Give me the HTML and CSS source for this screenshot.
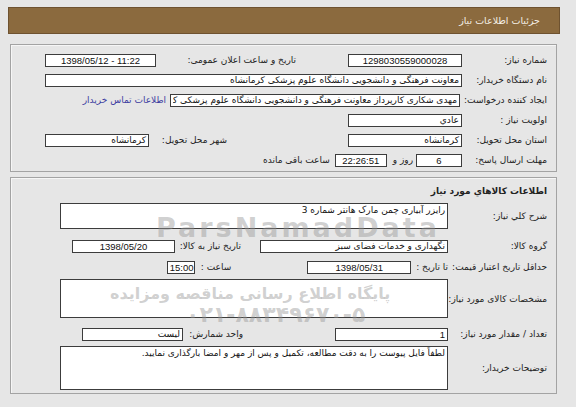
FILE: index.html
```html
<!DOCTYPE html>
<html lang="fa" dir="rtl">
<head>
<meta charset="utf-8">
<title>جزئیات اطلاعات نیاز</title>
<link rel="stylesheet" href="styles.css">
</head>
<body>
<div class="page">
  <div class="header">جزئیات اطلاعات نیاز</div>

  <div class="panel p1">
    <div class="row">
      <span class="lbl">شماره نیاز:</span>
      <span class="box c num" dir="ltr" style="width:114px">1298030559000028</span>
      <span class="lbl2" style="margin-right:52px;width:140px">تاریخ و ساعت اعلان عمومی:</span>
      <span class="box c num" dir="ltr" style="width:111px">1398/05/12 - 11:22</span>
    </div>
    <div class="row">
      <span class="lbl">نام دستگاه خریدار:</span>
      <span class="box" style="width:417px">معاونت فرهنگی و دانشجویی دانشگاه علوم پزشکی کرمانشاه</span>
    </div>
    <div class="row">
      <span class="lbl auto">ایجاد کننده درخواست:</span>
      <span class="box clip" style="width:290px"><span class="inner">مهدی شکاری کارپرداز معاونت فرهنگی و دانشجویی دانشگاه علوم پزشکی کرم</span></span>
      <a class="link" href="#">اطلاعات تماس خریدار</a>
    </div>
    <div class="row">
      <span class="lbl">اولویت نیاز :</span>
      <span class="box" style="width:114px">عادي</span>
    </div>
    <div class="row">
      <span class="lbl">استان محل تحویل:</span>
      <span class="box" style="width:114px">کرمانشاه</span>
      <span class="lbl2" style="margin-right:121px;width:78px">شهر محل تحویل:</span>
      <span class="box" style="width:104px">کرمانشاه</span>
    </div>
    <div class="row">
      <span class="lbl">مهلت ارسال پاسخ:</span>
      <span class="box c num" style="width:46px">6</span>
      <span class="txt" style="margin-right:3px">روز و</span>
      <span class="box c num" dir="ltr" style="width:52px;margin-right:6px">22:26:51</span>
      <span class="txt" style="margin-right:5px">ساعت باقی مانده</span>
    </div>
  </div>

  <div class="panel p2">
    <div class="title">اطلاعات کالاهاي مورد نياز</div>
    <div class="row r-desc">
      <span class="lbl">شرح کلي نياز:</span>
      <span class="area" style="height:26px">رایزر آبیاری چمن مارک هانتر شماره 3</span>
    </div>
    <div class="row r-group">
      <span class="lbl">گروه کالا:</span>
      <span class="box" style="width:188px">نگهداری و خدمات فضای سبز</span>
      <span class="lbl2" style="margin-right:19px;width:66px">تاریخ نیاز به کالا:</span>
      <span class="box c num" dir="ltr" style="width:103px">1398/05/20</span>
    </div>
    <div class="row r-price">
      <span class="lbl auto">حداقل تاریخ اعتبار قیمت:</span>
      <span class="txt">تا تاریخ :</span>
      <span class="box c num" dir="ltr" style="width:104px;margin-right:5px">1398/05/31</span>
      <span class="txt" style="margin-right:76px">ساعت :</span>
      <span class="box num" dir="ltr" style="width:28px;margin-right:6px">15:00</span>
    </div>
    <div class="row r-spec">
      <span class="lbl">مشخصات کالای مورد نیاز:</span>
      <span class="area" style="height:39px"></span>
    </div>
    <div class="row r-qty">
      <span class="lbl">تعداد / مقدار مورد نیاز:</span>
      <span class="box num" style="width:113px">1</span>
      <span class="lbl2" style="margin-right:92px;width:60px">واحد شمارش:</span>
      <span class="box" style="width:101px">لیست</span>
    </div>
    <div class="row r-note">
      <span class="lbl">توضیحات خریدار:</span>
      <span class="area" style="height:44px">لطفاً فایل پیوست را به دقت مطالعه، تکمیل و پس از مهر و امضا بارگذاری نمایید.</span>
    </div>
  </div>

  <div class="wm wm1" dir="ltr">ParsNamadData</div>
  <div class="wm wm2">پایگاه اطلاع رسانی مناقصه ومزایده</div>
  <div class="wm wm3" dir="ltr">۰۲۱-۸۸۳۴۹۶۷۰-۵</div>
</div>
</body>
</html>
```
FILE: styles.css
```css
html, body {
  margin: 0;
  padding: 0;
  background: #e6e6e6;
}
body {
  font-family: "DejaVu Sans", "Liberation Sans", sans-serif;
  font-size: 9px;
  color: #222;
}
.page {
  position: relative;
  width: 576px;
  height: 407px;
  padding: 7px 16px 0 8px;
  box-sizing: border-box;
  overflow: hidden;
}
.header {
  height: 27px;
  background: #8b6a3e;
  border: 1px solid #6e5230;
  box-sizing: border-box;
  color: #f4efe6;
  font-size: 9.5px;
  line-height: 25px;
  padding-right: 19px;
}
.panel {
  margin: 0 3px 0 2px;
  border: 1px solid #a3a3a3;
  box-shadow: inset 1px 1px 0 #f6f6f6;
  padding-right: 9px;
}
.p1 {
  margin-top: 10px;
  padding-top: 5px;
  padding-bottom: 1px;
}
.p2 {
  margin-top: 5px;
  padding-top: 3px;
  padding-bottom: 2px;
}
.row {
  display: flex;
  align-items: center;
  height: 20px;
  white-space: nowrap;
}
.lbl {
  width: 85px;
  flex: none;
}
.p2 .lbl {
  width: 99px;
}
.lbl.auto, .p2 .lbl.auto {
  width: auto;
  margin-left: 4px;
}
.lbl2, .txt {
  flex: none;
}
.lbl2 {
  box-sizing: border-box;
}
.box {
  display: block;
  flex: none;
  box-sizing: border-box;
  height: 13px;
  line-height: 11px;
  background: #fff;
  border: 1px solid #3c3c3c;
  padding: 0 2px;
  overflow: hidden;
  color: #111;
  font-size: 9px;
}
.box.c {
  text-align: center;
}
.box.num {
  font-family: "Liberation Sans", "DejaVu Sans", sans-serif;
  font-size: 9.5px;
}
.box.clip .inner {
  display: block;
  width: 100%;
  overflow: hidden;
}
.link {
  color: #3c3ca0;
  text-decoration: none;
  margin-right: 4px;
}
.title {
  height: 20px;
  line-height: 20px;
  font-weight: bold;
  color: #222;
}
.r-desc {
  height: 30px;
}
.r-group {
  margin-top: 5px;
}
.r-price {
  margin-top: 1px;
}
.r-spec {
  height: 43px;
}
.r-qty {
  margin-top: 4px;
}
.r-note {
  height: 47px;
}
.area {
  display: block;
  flex: none;
  box-sizing: border-box;
  width: 388px;
  background: #fff;
  border: 1px solid #3c3c3c;
  padding: 1px 2px;
  line-height: 11px;
  color: #111;
  font-size: 9px;
  overflow: hidden;
}
.wm {
  position: absolute;
  white-space: nowrap;
  pointer-events: none;
  color: rgba(150, 150, 150, 0.45);
  font-weight: bold;
}
.wm1 {
  left: 156px;
  top: 212px;
  font-family: "DejaVu Sans", sans-serif;
  font-size: 27px;
  letter-spacing: 3px;
}
.wm2 {
  left: 110px;
  top: 284px;
  font-size: 16px;
}
.wm3 {
  left: 186px;
  top: 302px;
  font-size: 22px;
}
```
